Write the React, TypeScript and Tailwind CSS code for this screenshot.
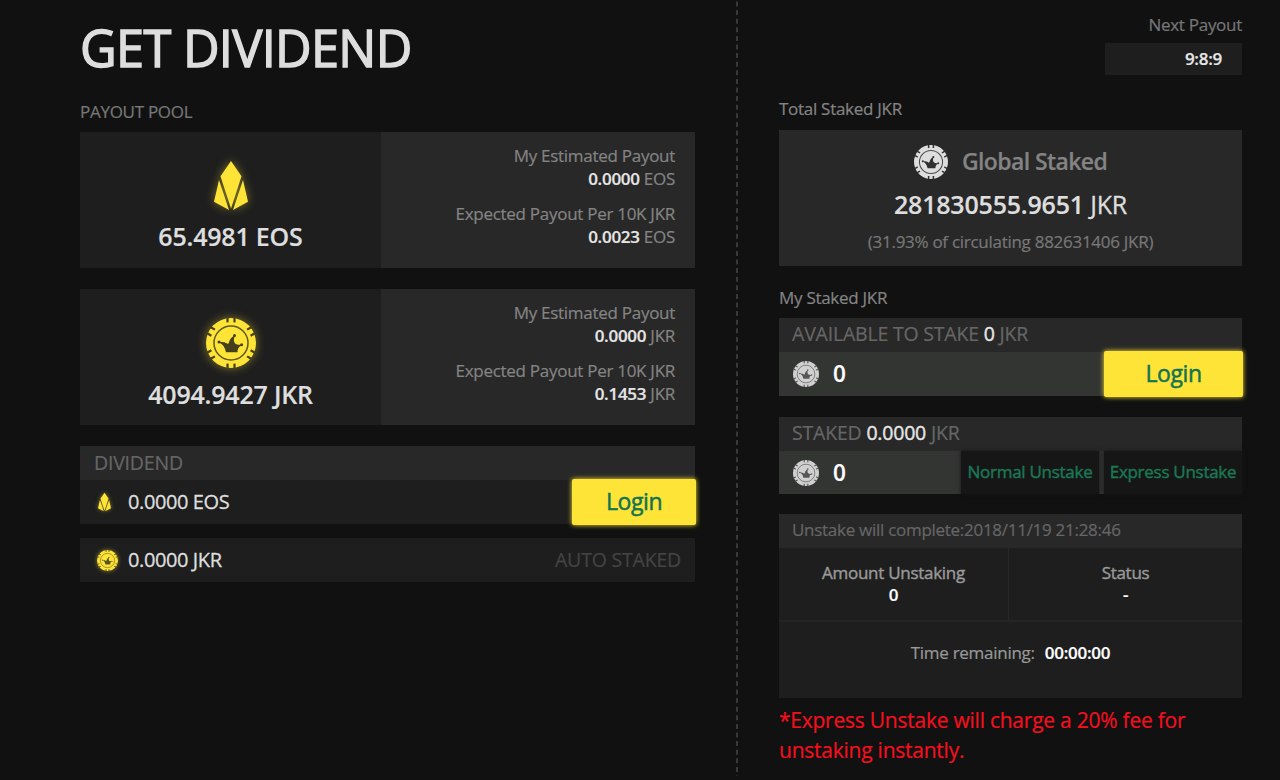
import type { ReactNode } from "react";

// the chip has six notch pairs around its rim
const NOTCHES = [0, 60, 120, 180, 240, 300];

function ChipIcon({ className, color, bg }: { className: string; color: string; bg: string }) {
  return (
    <svg viewBox="0 0 50 50" className={className}>
      <circle cx="25" cy="25" r="25" fill={color} />
      {NOTCHES.map((deg) => (
        <g key={deg} transform={`rotate(${deg} 25 25)`} fill={bg}>
          <rect x="20.4" y="-1" width="2.2" height="5.4" />
          <rect x="27.4" y="-1" width="2.2" height="5.4" />
        </g>
      ))}
      <circle cx="25" cy="25" r="17" fill="none" stroke={bg} strokeWidth="1.5" opacity="0.85" />
      <path
        d="M20 34.300h11.500c0-2.700.600-4.800 3.600-6.700l-.300-.900c-2.200.300-4.300-.100-5.700-1.300-1.400-1.700-1.700-4.100-.400-7l-1-.500c-2.500 1.500-4.200 3.700-4.700 6.600l-1.100 1.500c-2.200-1.500-5-2.200-8.300-2.200v.900c3.300 1.500 5.400 4.700 6.400 9.600z"
        fill={bg}
      />
      <circle cx="13" cy="24" r="1.5" fill={bg} />
      <circle cx="28.500" cy="17.500" r="1.500" fill={bg} />
      <circle cx="35.600" cy="26.800" r="1.500" fill={bg} />
    </svg>
  );
}

function EosIcon({ className }: { className: string }) {
  return (
    <svg viewBox="0 0 34 49" className={className} fill="#ffe438">
      <path d="M17 0 27.500 15.200 17 47.500 6.500 15.200z" />
      <path d="M5 19 15 49 0 40.700z" />
      <path d="M29 19 19 49 34 40.700z" />
    </svg>
  );
}

function PayoutRow({ label, value, unit }: { label: string; value: string; unit: string }) {
  return (
    <div>
      <p className="-mt-px mb-px">{label}</p>
      <p>
        <span className="font-semibold text-[#e6e6e6]">{value}</span> {unit}
      </p>
    </div>
  );
}

function PoolCard({ icon, total, unit, per10k }: { icon: ReactNode; total: string; unit: string; per10k: string }) {
  return (
    <div className="mb-[21px] flex h-[136px] leading-[22px]">
      <div className="flex w-[301px] flex-col items-center bg-[#1e1e1e] pt-[29px]">
        {icon}
        <p className="mt-[9px] text-[25px] leading-[34px] font-semibold tracking-[-0.2px] text-[#dedede]">
          {total} {unit}
        </p>
      </div>
      <div className="flex flex-1 flex-col gap-[14px] bg-[#282828] pt-[14px] pr-5 text-right text-[#848484]">
        <PayoutRow label="My Estimated Payout" value="0.0000" unit={unit} />
        <PayoutRow label="Expected Payout Per 10K JKR" value={per10k} unit={unit} />
      </div>
    </div>
  );
}

function LoginButton({ className }: { className: string }) {
  return (
    <button
      className={`rounded-[2px] bg-[#ffe438] pb-[2px] text-[23px] tracking-[-0.4px] text-[#127352] shadow-[0_0_5px_#ffe438] [-webkit-text-stroke:0.5px] ${className}`}
    >
      Login
    </button>
  );
}

function StakeHeader({ label, value }: { label: string; value: string }) {
  return (
    <div className="h-[34px] bg-[#282828] pl-[13px] text-[19.5px] leading-[32px] tracking-[-0.2px] text-[#666]">
      {label} <span className="text-[#e6e6e6] [-webkit-text-stroke:0.4px]">{value}</span> JKR
    </div>
  );
}

function StakeInput() {
  return (
    <div className="flex flex-1 items-center bg-[#333533] pl-[14px]">
      <ChipIcon className="size-[26px]" color="#d0d0d0" bg="#555755" />
      <span className="ml-[14px] text-[22.5px] font-semibold text-white">0</span>
    </div>
  );
}

function DividendPanel() {
  return (
    <section className="w-[615px]">
      <h1 className="mt-[12px] text-[50.5px] leading-[72px] tracking-[-0.7px] text-[#dedede] [-webkit-text-stroke:1.4px]">GET DIVIDEND</h1>
      <p className="mt-[16px] mb-[8px] leading-[24px] text-[#777]">PAYOUT POOL</p>
      <PoolCard
        icon={<EosIcon className="h-[49px] w-[34px] drop-shadow-[0_0_5px_#ffe43870]" />}
        total="65.4981"
        unit="EOS"
        per10k="0.0023"
      />
      <PoolCard
        icon={<ChipIcon className="size-[50px] drop-shadow-[0_0_5px_#ffe43870]" color="#ffe438" bg="#453f1b" />}
        total="4094.9427"
        unit="JKR"
        per10k="0.1453"
      />
      <div className="h-[34px] bg-[#282828] pl-[14px] text-[19.5px] leading-[34px] tracking-[-0.2px] text-[#666]">DIVIDEND</div>
      <div className="flex h-[44px] items-center bg-[#1e1e1e] text-[20px] tracking-[-0.4px] text-[#dedede]">
        <div className="flex w-[48px] justify-center">
          <EosIcon className="h-[20px] w-[13px] drop-shadow-[0_0_2px_#ffe43880]" />
        </div>
        <span className="flex-1 [-webkit-text-stroke:0.3px]">0.0000 EOS</span>
        <LoginButton className="-mr-px h-[46px] w-[124px]" />
      </div>
      <div className="mt-[14px] flex h-[44px] items-center bg-[#1e1e1e] pr-[14px] pl-[17px] text-[20px] tracking-[-0.4px] text-[#dedede]">
        <ChipIcon className="size-[21px] drop-shadow-[0_0_2px_#ffe43880]" color="#ffe438" bg="#5a5220" />
        <span className="ml-[10px] flex-1 [-webkit-text-stroke:0.3px]">0.0000 JKR</span>
        <span className="text-[19.5px] tracking-[-0.2px] text-[#444]">AUTO STAKED</span>
      </div>
    </section>
  );
}

function UnstakeStatus() {
  return (
    <div className="mt-[20px] h-[184px] bg-[#1e1e1e] leading-[22px] text-[#999]">
      <div className="h-[34px] bg-[#282828] pl-[13px] leading-[32px] text-[#666]">Unstake will complete:2018/11/19 21:28:46</div>
      <div className="flex h-[74px] border-b-2 border-[#252525] text-center">
        <div className="w-[230px] border-r border-[#282828] pt-[14px]">
          <p className="[-webkit-text-stroke:0.4px]">Amount Unstaking</p>
          <p className="font-semibold text-white">0</p>
        </div>
        <div className="flex-1 pt-[14px]">
          <p className="[-webkit-text-stroke:0.4px]">Status</p>
          <p className="font-semibold text-white">-</p>
        </div>
      </div>
      <p className="pt-[20px] text-center">
        Time remaining: <span className="ml-[6px] font-semibold text-white">00:00:00</span>
      </p>
    </div>
  );
}

function StakingPanel() {
  return (
    <section className="w-[463px]">
      <div className="flex flex-col items-end">
        <p className="mt-[13px] leading-[24px] text-[#777]">Next Payout</p>
        <div className="mt-[6px] h-[32px] w-[137px] bg-[#1e1e1e] pr-5 text-right leading-[32px] font-semibold text-[#e6e6e6]">9:8:9</div>
      </div>
      <p className="mt-[22px] mb-[9px] leading-[24px] text-[#848484]">Total Staked JKR</p>
      <div className="flex h-[136px] flex-col items-center bg-[#282828] pt-[15px]">
        <div className="flex h-[34px] items-center gap-[14px]">
          <ChipIcon className="size-[34px]" color="#dedede" bg="#303030" />
          <span className="pb-[2px] text-[23px] leading-[32px] font-semibold tracking-[-0.6px] text-[#848484]">Global Staked</span>
        </div>
        <p className="mt-[8px] text-[25px] leading-[34px] tracking-[-0.2px] text-[#dedede]">
          <span className="font-semibold">281830555.9651</span> <span className="[-webkit-text-stroke:0.3px]">JKR</span>
        </p>
        <p className="mt-[9px] leading-[24px] text-[#777]">(31.93% of circulating 882631406 JKR)</p>
      </div>

      <p className="mt-[20px] mb-[8px] leading-[24px] text-[#848484]">My Staked JKR</p>
      <StakeHeader label="AVAILABLE TO STAKE" value="0" />
      <div className="flex h-[44px] items-center bg-[#333533]">
        <StakeInput />
        <LoginButton className="-mr-px h-[46px] w-[139px]" />
      </div>

      <div className="mt-[21px]">
        <StakeHeader label="STAKED" value="0.0000" />
        <div className="flex h-[43px] bg-[#333533] text-[#1b7955]">
          <StakeInput />
          <button className="mr-[5px] w-[138px] bg-[#161616] pb-[2px] shadow-[0_0_4px_#161616] [-webkit-text-stroke:0.4px]">
            Normal Unstake
          </button>
          <button className="w-[138px] bg-[#161616] pb-[2px] shadow-[0_0_4px_#161616] [-webkit-text-stroke:0.4px]">
            Express Unstake
          </button>
        </div>
      </div>

      <UnstakeStatus />
      <p className="mt-[7px] text-[21px] leading-[30px] tracking-[-0.24px] text-[#f50f1e]">
        *Express Unstake will charge a 20% fee for
        <br />
        unstaking instantly.
      </p>
    </section>
  );
}

export default function App() {
  return (
    <main className="flex h-[780px] w-[1280px] overflow-hidden bg-[#111] pl-[80px] font-['Open_Sans',sans-serif] text-[17px] tracking-[-0.28px] whitespace-nowrap [-webkit-text-stroke:0.2px]">
      <DividendPanel />
      <svg className="mr-[41px] ml-[41px] h-[776px] w-[2px] shrink-0">
        <line x1="1" y1="1.5" x2="1" y2="776" stroke="#444" strokeWidth="1.6" strokeDasharray="5 3.6" />
      </svg>
      <StakingPanel />
    </main>
  );
}
